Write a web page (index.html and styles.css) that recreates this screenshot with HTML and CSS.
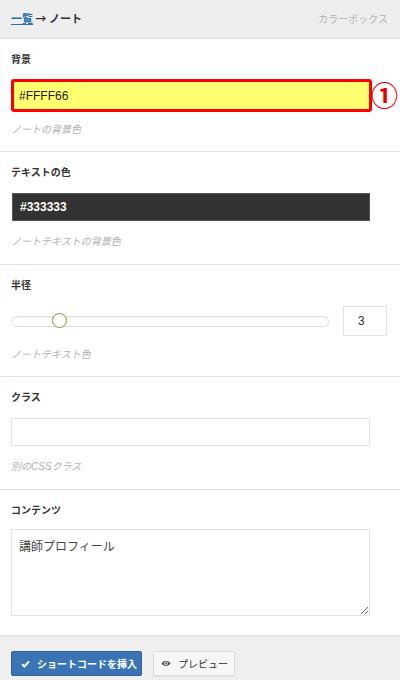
FILE: index.html
```
<!DOCTYPE html>
<html lang="ja">
<head>
<meta charset="utf-8">
<link rel="stylesheet" href="styles.css">
</head>
<body>
<div class="panel">
  <header class="topbar">
    <div class="crumbs"><a class="crumb-link" href="#">一覧</a> → ノート</div>
    <div class="plugin">カラーボックス</div>
  </header>

  <section class="field field-first">
    <div class="label">背景</div>
    <div class="input-wrap">
      <input class="text-input input-yellow" type="text" value="#FFFF66">
      <span class="badge">①</span>
    </div>
    <div class="hint hint-first">ノートの背景色</div>
  </section>

  <section class="field">
    <div class="label">テキストの色</div>
    <input class="text-input input-dark" type="text" value="#333333">
    <div class="hint">ノートテキストの背景色</div>
  </section>

  <section class="field field-slider">
    <div class="label">半径</div>
    <div class="slider-row">
      <div class="track"><div class="thumb"></div></div>
      <input class="num-input" type="text" value="3">
    </div>
    <div class="hint">ノートテキスト色</div>
  </section>

  <section class="field">
    <div class="label">クラス</div>
    <input class="text-input" type="text" value="">
    <div class="hint">別のCSSクラス</div>
  </section>

  <section class="field field-last">
    <div class="label">コンテンツ</div>
    <textarea class="textarea">講師プロフィール</textarea>
  </section>

  <footer class="footer">
    <button class="btn btn-primary">
      <svg class="icon" width="9" height="8" viewBox="0 0 9 8"><path d="M1 4.2 L3.4 6.5 L8 1.3" fill="none" stroke="#fff" stroke-width="2"/></svg>
      ショートコードを挿入
    </button>
    <button class="btn btn-default">
      <svg class="icon" width="10" height="7" viewBox="0 0 10 7"><path d="M0.5 3.5 C2.5 0.3 7.5 0.3 9.5 3.5 C7.5 6.7 2.5 6.7 0.5 3.5 Z" fill="#555"/><circle cx="5" cy="3.5" r="1.8" fill="#f4f4f4"/><circle cx="5" cy="3.5" r="1" fill="#555"/></svg>
      プレビュー
    </button>
  </footer>
</div>
</body>
</html>
```
FILE: styles.css
```
* { box-sizing: border-box; }
html, body { margin: 0; padding: 0; }
body {
  background: #ffffff;
  font-family: "Liberation Sans", "Noto Sans CJK JP", sans-serif;
  color: #333;
  width: 400px;
  height: 680px;
  overflow: hidden;
}
.panel { display: flex; flex-direction: column; }

.topbar {
  height: 39px;
  background: #eeeeee;
  border-bottom: 1px solid #dcdcdc;
  display: flex;
  align-items: center;
  justify-content: space-between;
  padding: 0 12px 0 11px;
}
.crumbs { font-family: "Noto Sans CJK JP", sans-serif; font-size: 11px; font-weight: 700; color: #333; margin-top: -2px; }
.crumb-link { color: #2a6fb5; text-decoration: underline; }
.plugin { font-family: "Noto Sans CJK JP", sans-serif; font-size: 10px; color: #b5b5b5; margin-top: -2px; }

.field {
  padding: 14px 11px 15px 11px;
  border-bottom: 1px solid #e2e2e2;
  display: flex;
  flex-direction: column;
}
.field-first { padding-bottom: 14px; }
.field-slider { padding-bottom: 14px; }
.field-slider .hint { margin-top: 12px; }
.field-last { border-bottom: 1px solid #e0e0e0; padding-bottom: 17px; height: 146px; }

.label { font-size: 10px; font-weight: 700; line-height: 14px; height: 14px; color: #333; margin-bottom: 13px; flex-shrink: 0; }
.field-first .label { margin-bottom: 12px; }

.text-input {
  width: 359px;
  height: 28px;
  border: 1px solid #e2e2e2;
  background: #fff;
  padding: 0 7px;
  font-family: "Liberation Sans", "Noto Sans CJK JP", sans-serif;
  font-size: 12px;
  color: #333;
  outline: none;
  margin: 0;
  display: block;
}
.input-wrap { position: relative; width: 361px; }
.input-yellow {
  width: 361px;
  height: 33px;
  background: #ffff6f;
  border: 3px solid #ff0000;
  border-radius: 3px;
  padding: 0 5px;
  color: #222;
}
.badge {
  position: absolute;
  left: 360px;
  top: 1px;
  font-family: "Noto Sans CJK JP", sans-serif;
  font-size: 27px;
  font-weight: 700;
  line-height: 30px;
  color: #e60000;
}
.input-dark {
  background: #323232;
  border: 1px solid #555;
  color: #fff;
  font-weight: 700;
  margin-left: 1px;
  width: 358px;
}

.hint {
  font-size: 10px;
  line-height: 14px;
  height: 14px;
  font-style: italic;
  color: #b0b0b0;
  margin-top: 14px;
}
.hint-first { margin-top: 11px; }

.slider-row {
  display: flex;
  align-items: center;
  height: 30px;
  gap: 14px;
}
.track {
  position: relative;
  width: 318px;
  height: 11px;
  border: 1px solid #dedede;
  border-radius: 6px;
  background: #fff;
  box-shadow: inset 0 1px 1px rgba(0,0,0,0.05);
  margin-top: 1px;
}
.thumb {
  position: absolute;
  left: 40px;
  top: -4px;
  width: 15px;
  height: 15px;
  border-radius: 50%;
  background: #fff;
  border: 1.5px solid #8b8b45;
}
.num-input {
  width: 44px;
  height: 30px;
  border: 1px solid #e2e2e2;
  background: #fff;
  padding: 0 14px;
  font-family: "Liberation Sans", sans-serif;
  font-size: 12px;
  color: #333;
  outline: none;
  margin: 0;
}

.textarea {
  width: 359px;
  height: 87px;
  flex-shrink: 0;
  margin: 0;
  border: 1px solid #e2e2e2;
  padding: 8px 7px;
  font-family: "Noto Sans CJK JP", sans-serif;
  font-size: 12px;
  line-height: 16px;
  color: #444;
  outline: none;
  resize: both;
  margin-top: -2px;
}

.footer {
  height: 45px;
  background: #efefef;
  border-top: 1px solid #e6e6e6;
  display: flex;
  align-items: flex-start;
  gap: 11px;
  padding: 14px 11px 0 11px;
}
.btn {
  height: 25px;
  display: flex;
  align-items: center;
  gap: 7px;
  font-family: "Noto Sans CJK JP", sans-serif;
  font-size: 10px;
  border-radius: 2px;
  margin: 0;
  cursor: pointer;
}
.btn-primary {
  width: 131px;
  background: #3b74b4;
  border: 1px solid #2f64a0;
  color: #fff;
  font-weight: 700;
  padding: 0 0 0 9px;
}
.btn-default {
  width: 82px;
  background: #f7f7f7;
  border: 1px solid #dcdcdc;
  color: #333;
  padding: 0 0 0 7px;
  box-shadow: 0 1px 0 rgba(0,0,0,0.05);
}
.icon { display: block; }
```
